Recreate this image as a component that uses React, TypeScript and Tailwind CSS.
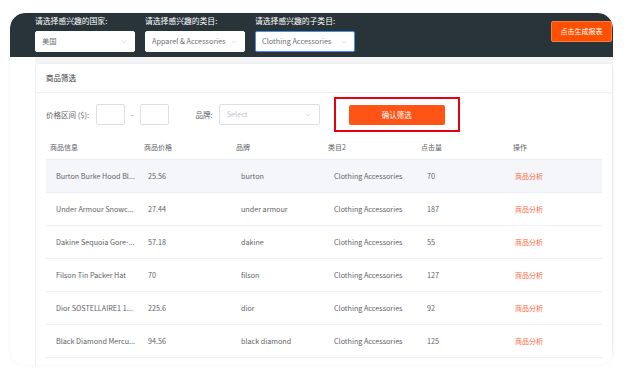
import React from 'react';
import { ChevronDown } from 'lucide-react';

interface Row {
  name: string;
  price: string;
  brand: string;
  category: string;
  clicks: number;
}

const rows: Row[] = [
  { name: 'Burton Burke Hood Bl...', price: '25.56', brand: 'burton', category: 'Clothing Accessories', clicks: 70 },
  { name: 'Under Armour Snowc...', price: '27.44', brand: 'under armour', category: 'Clothing Accessories', clicks: 187 },
  { name: 'Dakine Sequoia Gore-...', price: '57.18', brand: 'dakine', category: 'Clothing Accessories', clicks: 55 },
  { name: 'Filson Tin Packer Hat', price: '70', brand: 'filson', category: 'Clothing Accessories', clicks: 127 },
  { name: 'Dior SOSTELLAIRE1 1...', price: '225.6', brand: 'dior', category: 'Clothing Accessories', clicks: 92 },
  { name: 'Black Diamond Mercu...', price: '94.56', brand: 'black diamond', category: 'Clothing Accessories', clicks: 125 },
];

const headers = ['商品信息', '商品价格', '品牌', '类目2', '点击量', '操作'];

function HeaderSelect({ label, value, focused }: { label: string; value: string; focused?: boolean }) {
  return (
    <div className="w-[100px] mr-[10px] flex flex-col">
      <div className="h-[18px] pt-[2px] text-[7.8px] leading-[12px] text-white">{label}</div>
      <div
        className={`h-[21px] bg-white rounded-[2px] flex items-center justify-between pl-[6px] pr-[6px] border ${
          focused ? 'border-[#4a90e2]' : 'border-white'
        }`}
      >
        <span className="text-[7.3px] text-[#6b6e75] truncate">{value}</span>
        <ChevronDown size={8} strokeWidth={1.5} color="#c0c4cc" />
      </div>
    </div>
  );
}

export default function App() {
  return (
    <div className="w-[633px] h-[375px] bg-white overflow-hidden" style={{ fontFamily: '"Noto Sans CJK SC", "Noto Sans", sans-serif' }}>
      <div className="pt-[13px] pl-[10px] w-[613px]">
        <div className="rounded-[15px] shadow-[0_0_4px_rgba(0,0,0,0.06)] h-[352px] overflow-hidden">
          {/* 顶部选择栏 */}
          <div className="rounded-t-[15px] bg-[#29333a] h-[44px] flex items-start pl-[25px] pr-[1px]">
            <HeaderSelect label="请选择感兴趣的国家:" value="美国" />
            <HeaderSelect label="请选择感兴趣的类目:" value="Apparel & Accessories" />
            <HeaderSelect label="请选择感兴趣的子类目:" value="Clothing Accessories" focused />
            <button className="ml-auto mt-[8px] w-[61px] h-[21px] bg-[#ff5000] rounded-[2px] text-white text-[7px] border border-[#ff7a40]">
              点击生成报表
            </button>
          </div>

          <div className="pl-[25px]">
            <div className="h-[6px] bg-[#f4f4f5]" />
            {/* 商品筛选卡片 */}
            <div className="border border-[#ebeef5] bg-white rounded-[3px] h-[320px]">
              <div className="h-[29px] border-b border-[#ebeef5] flex items-center pl-[10px] text-[7.5px] text-[#303133]">
                商品筛选
              </div>

              <div className="h-[43px] flex items-center pl-[10px]">
                <span className="text-[7.5px] text-[#606266] mr-[7px]">价格区间 ($):</span>
                <div className="w-[29px] h-[21px] border border-[#dcdfe6] rounded-[2px]" />
                <span className="text-[7.5px] text-[#606266] mx-[6px]">-</span>
                <div className="w-[29px] h-[21px] border border-[#dcdfe6] rounded-[2px]" />
                <span className="text-[7.5px] text-[#606266] ml-[27px] mr-[6px]">品牌:</span>
                <div className="w-[101px] h-[21px] border border-[#dcdfe6] rounded-[2px] flex items-center justify-between px-[7px]">
                  <span className="text-[7.3px] text-[#c0c4cc]">Select</span>
                  <ChevronDown size={8} strokeWidth={1.5} color="#c0c4cc" />
                </div>
                <div className="ml-[14px] w-[126px] h-[35px] border-2 border-[#e60012] flex items-center justify-center">
                  <button className="w-[96px] h-[20px] bg-[#ff5416] rounded-[2px] text-white text-[7.5px]">
                    确认筛选
                  </button>
                </div>
              </div>

              {/* 表格 */}
              <div className="mx-[10px] w-[556px]">
                <div className="grid grid-cols-[98px_92px_92px_93px_92px_89px] h-[24px] items-center border-b border-[#ebeef5] text-[7px] text-[#606266]">
                  {headers.map((h, i) => (
                    <div key={h} className={i === 0 ? 'pl-[4px]' : ''}>{h}</div>
                  ))}
                </div>
                {rows.map((r, idx) => (
                  <div
                    key={idx}
                    className={`grid grid-cols-[98px_92px_92px_93px_92px_89px] h-[33px] items-center border-b border-[#ebeef5] text-[7.2px] text-[#606266] ${
                      idx === 0 ? 'bg-[#f5f6fa]' : ''
                    }`}
                  >
                    <div className="pl-[10px] truncate">{r.name}</div>
                    <div className="pl-[4px]">{r.price}</div>
                    <div className="pl-[5px]">{r.brand}</div>
                    <div className="pl-[6px]">{r.category}</div>
                    <div className="pl-[6px]">{r.clicks}</div>
                    <div className="pl-[2px] text-[7px] text-[#ff6a3d]">商品分析</div>
                  </div>
                ))}
              </div>
            </div>
          </div>
        </div>
      </div>
    </div>
  );
}
